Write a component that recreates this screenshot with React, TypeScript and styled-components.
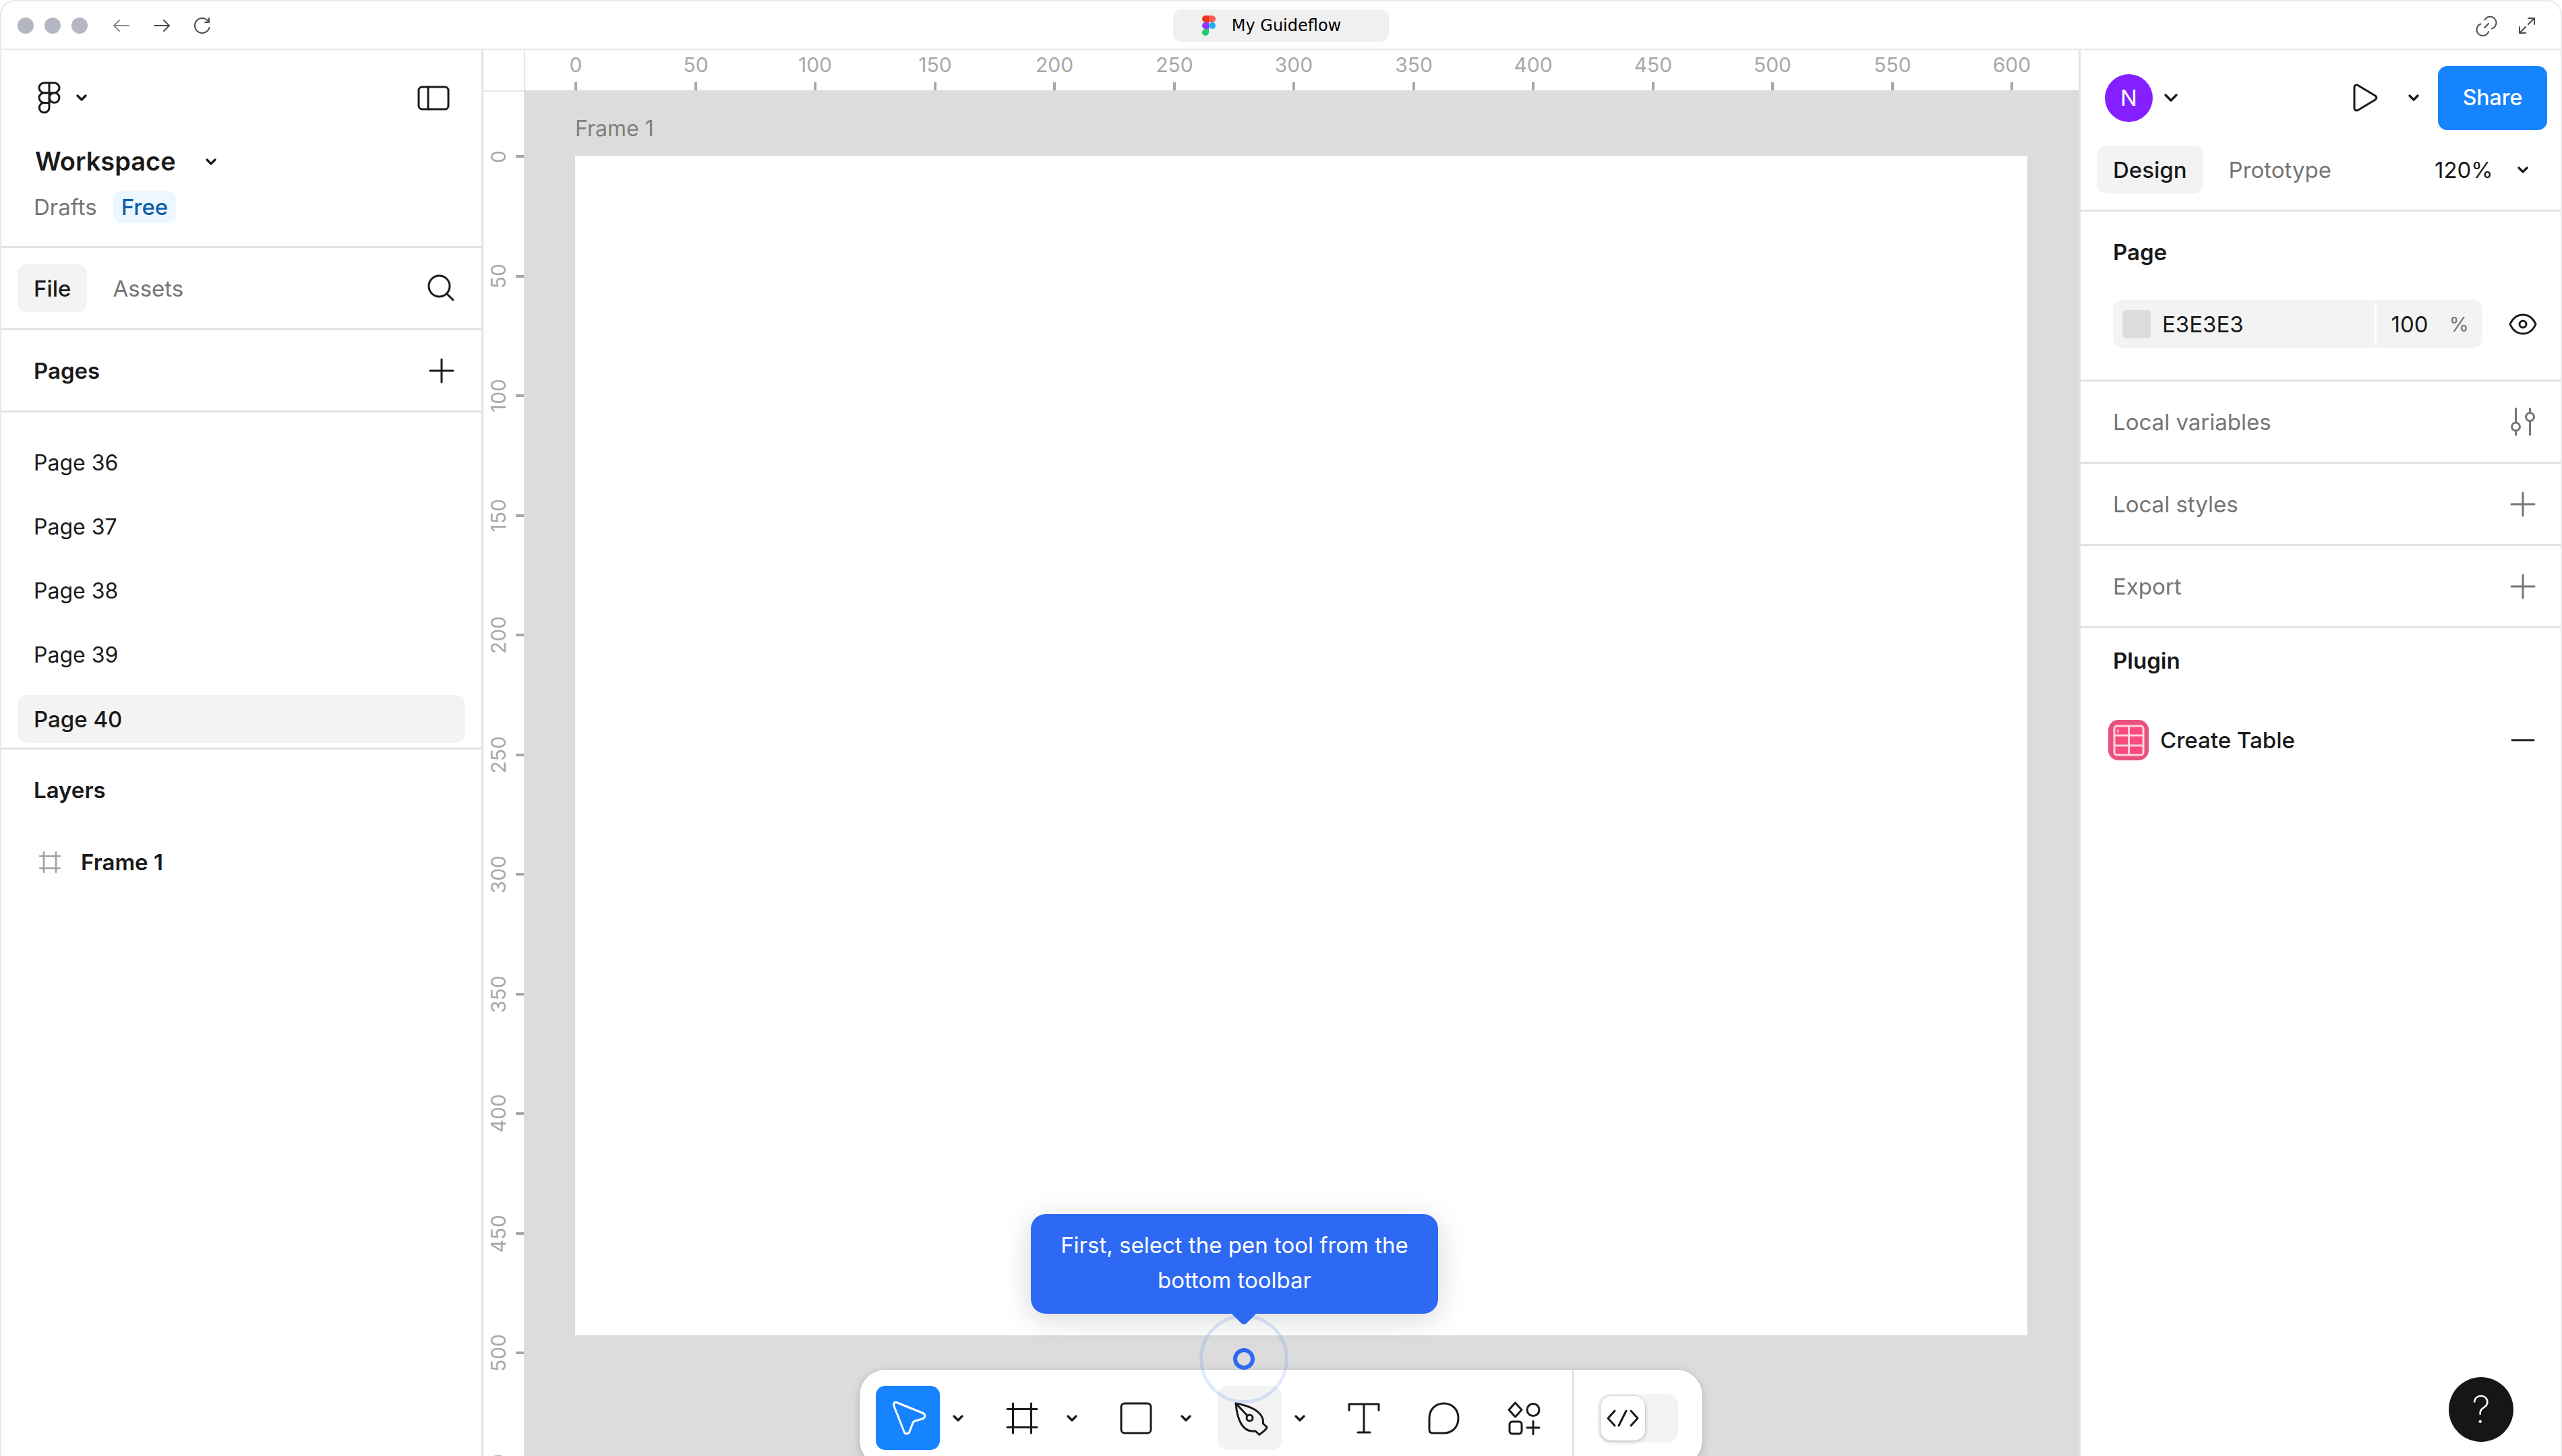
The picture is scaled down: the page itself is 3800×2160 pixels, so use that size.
import React from "react";
import styled, { createGlobalStyle } from "styled-components";

const ink = "#1a1a1a";
const muted = "#757575";
const line = "#e2e2e2";
const blue = "#1683ff";
const guideBlue = "#2e69f3";

const GlobalStyle = createGlobalStyle`
  *, *::before, *::after { box-sizing: border-box; }
  body { margin: 0; background: #fff; overflow: hidden; }
  button, input, select { font: inherit; color: inherit; border: 0; padding: 0; margin: 0; background: none; }
  button { cursor: pointer; }
  svg { display: block; flex: none; overflow: visible; }
  h1, h2, p, ul { margin: 0; padding: 0; }
`;

const App = styled.div`
  position: relative;
  display: flex;
  flex-direction: column;
  height: 100vh;
  overflow: hidden;
  border: 2px solid #e9e9e9;
  border-bottom: 0;
  border-radius: 22px 22px 0 0;
  background: #fff;
  color: ${ink};
  font: 400 33px/40px Inter, "Liberation Sans", sans-serif;
`;

const TitleBar = styled.header`
  display: grid;
  grid-template-columns: 1fr auto 1fr;
  align-items: center;
  height: 72px;
  padding: 2px 24px 0;
  border-bottom: 2px solid #e9e9e9;
`;

const TitleSide = styled.div<{ $end?: boolean }>`
  display: flex;
  align-items: center;
  justify-content: ${(p) => (p.$end ? "flex-end" : "flex-start")};
  gap: 36px;
  padding-right: ${(p) => (p.$end ? 14 : 0)}px;
`;

const Lights = styled.div`
  display: flex;
  gap: 16px;
  margin-right: 2px;
`;

const Light = styled.span`
  width: 24px;
  height: 24px;
  border-radius: 50%;
  background: #b4b7c1;
`;

const TabChip = styled.div`
  display: flex;
  align-items: center;
  justify-content: center;
  gap: 24px;
  width: 320px;
  height: 48px;
  padding-right: 28px;
  border-radius: 12px;
  background: #f0f0f0;
  color: #000;
  font: 400 24px/32px "DejaVu Sans", sans-serif;
`;

const TitleButton = styled.button<{ $dim?: boolean }>`
  display: flex;
  align-items: center;
  justify-content: center;
  width: 24px;
  height: 24px;
  color: ${(p) => (p.$dim ? "#8a8a8a" : "#4a4a4a")};
`;

const Workarea = styled.div`
  flex: 1;
  display: flex;
  min-height: 0;
`;

const Panel = styled.aside<{ $side: "left" | "right" }>`
  flex: none;
  width: 715px;
  ${(p) => (p.$side === "left" ? "border-right" : "border-left")}: 3px solid ${line};
  background: #fff;
`;

const Section = styled.section<{ $last?: boolean }>`
  border-bottom: ${(p) => (p.$last ? "0" : `3px solid ${line}`)};
`;

const Row = styled.div<{ $h?: number; $left?: number; $right?: number; $gap?: number }>`
  display: flex;
  align-items: center;
  height: ${(p) => p.$h ?? 119}px;
  padding: 0 ${(p) => p.$right ?? 24}px 0 ${(p) => p.$left ?? 48}px;
  gap: ${(p) => p.$gap ?? 0}px;
`;

const Spacer = styled.span`
  flex: 1;
`;

const Heading = styled.h2<{ $muted?: boolean }>`
  flex: 1;
  font-size: 33px;
  font-weight: ${(p) => (p.$muted ? 400 : 600)};
  color: ${(p) => (p.$muted ? muted : ink)};
`;

const IconButton = styled.button<{ $size?: number; $muted?: boolean }>`
  display: flex;
  align-items: center;
  justify-content: center;
  flex: none;
  width: ${(p) => p.$size ?? 71}px;
  height: ${(p) => p.$size ?? 71}px;
  border-radius: 14px;
  color: ${(p) => (p.$muted ? muted : ink)};
`;

const MenuButton = styled.button<{ $gap: number }>`
  display: flex;
  align-items: center;
  gap: ${(p) => p.$gap}px;
`;

const FileHead = styled.div`
  padding: 23px 0 38px;
`;

const WorkspaceName = styled.h1`
  font-size: 38px;
  line-height: 71px;
  font-weight: 600;
`;

const Plan = styled.span`
  padding: 0 12px;
  border-radius: 12px;
  background: #edf7ff;
  color: #0f5ea8;
  line-height: 48px;
  font-weight: 500;
`;

const Muted = styled.span`
  color: ${muted};
`;

const Tab = styled.button<{ $active?: boolean }>`
  height: 71px;
  padding: 0 24px;
  border-radius: 14px;
  background: ${(p) => (p.$active ? "#f3f3f3" : "transparent")};
  color: ${(p) => (p.$active ? ink : muted)};
  font-weight: ${(p) => (p.$active ? 500 : 400)};
`;

const PageList = styled.ul`
  display: flex;
  flex-direction: column;
  gap: 24px;
  padding: 39px 24px 7px;
  list-style: none;
`;

const PageItem = styled.button<{ $active: boolean }>`
  display: block;
  width: 100%;
  height: 71px;
  padding: 0 24px;
  border-radius: 14px;
  text-align: left;
  background: ${(p) => (p.$active ? "#f3f3f3" : "transparent")};
  font-size: ${(p) => (p.$active ? 33 : 32)}px;
  font-weight: ${(p) => (p.$active ? 500 : 400)};
`;

const Layer = styled.button`
  display: flex;
  align-items: center;
  gap: 30px;
  width: 100%;
  height: 95px;
  padding: 0 56px;
  font-weight: 600;
`;

const LayerMark = styled.span`
  color: #a0a0a0;
`;

const Stage = styled.main`
  flex: 1;
  display: grid;
  grid-template: 60px 1fr / 60px 1fr;
  min-width: 0;
`;

const TopRuler = styled.div`
  position: relative;
  overflow: hidden;
  border-left: 2px solid #e6e6e6;
`;

const SideRuler = styled.div`
  position: relative;
  overflow: hidden;
  border-top: 2px solid #e6e6e6;
`;

const rulerMark = `
  position: absolute;
  display: flex;
  align-items: center;
  justify-content: space-between;
  color: #a8a8a8;
  font-size: 30px;
  line-height: 30px;
  white-space: nowrap;
`;

const TopMark = styled.span`
  ${rulerMark}
  flex-direction: column;
  top: 7px;
  bottom: 0;
  width: 120px;
  margin-left: -60px;
  &::after { content: ""; width: 4px; height: 12px; background: #a8a8a8; }
`;

const SideMark = styled.span`
  ${rulerMark}
  left: 7px;
  right: 0;
  height: 120px;
  margin-top: -60px;
  &::after { content: ""; width: 12px; height: 4px; background: #a8a8a8; }
`;

const Turned = styled.span`
  writing-mode: vertical-rl;
  transform: rotate(180deg);
`;

const Canvas = styled.div`
  display: flex;
  flex-direction: column;
  gap: 20px;
  padding: 37px 76px 179px;
  background: #dcdcdc;
`;

const FrameLabel = styled.span`
  color: #808080;
  font-size: 32px;
`;

const Artboard = styled.div`
  flex: 1;
  background: #fff;
`;

const Avatar = styled.span`
  display: flex;
  align-items: center;
  justify-content: center;
  width: 71px;
  height: 71px;
  border-radius: 50%;
  background: #8420ff;
  color: #fff;
`;

const ShareButton = styled.button`
  width: 162px;
  height: 95px;
  margin-left: 12px;
  border-radius: 14px;
  background: ${blue};
  color: #fff;
  font-size: 32px;
  font-weight: 500;
`;

const InspectorHead = styled.div`
  display: flex;
  flex-direction: column;
  gap: 23px;
  padding: 23px 0 24px;
`;

const ZoomField = styled.label`
  display: flex;
  align-items: center;
  gap: 36px;
`;

const ZoomSelect = styled.select`
  appearance: none;
  outline: 0;
`;

const FillRow = styled.div`
  display: flex;
  gap: 24px;
  padding: 12px 21px 47px 48px;
`;

const FillBox = styled.div`
  flex: 1;
  display: flex;
  align-items: center;
  min-width: 0;
  height: 71px;
  padding-left: 14px;
  border-radius: 14px;
  background: #f3f3f3;
`;

const Swatch = styled.span`
  flex: none;
  width: 42px;
  height: 42px;
  margin-right: 17px;
  border-radius: 5px;
  background: #dcdcdc;
`;

const HexInput = styled.input`
  flex: 1;
  width: 100%;
  min-width: 0;
`;

const OpacityBox = styled.label`
  flex: none;
  display: flex;
  align-items: center;
  gap: 16px;
  height: 65px;
  padding: 0 20px 0 22px;
  border-left: 3px solid #fff;
  color: ${muted};
`;

const OpacityInput = styled.input`
  width: 70px;
  color: ${ink};
`;

const Percent = styled.span`
  font-size: 30px;
`;

const PluginBody = styled.div`
  display: flex;
  flex-direction: column;
  gap: 23px;
`;

const PluginName = styled.span`
  flex: 1;
  font-weight: 500;
`;

const DockLayer = styled.div`
  position: absolute;
  left: 0;
  right: 0;
  bottom: -15px;
  display: flex;
  justify-content: center;
  pointer-events: none;
`;

const Dock = styled.div`
  position: relative;
  display: flex;
  align-items: center;
  gap: 24px;
  height: 143px;
  padding-left: 24px;
  border-radius: 38px;
  background: #fff;
  box-shadow: 0 4px 14px rgba(0, 0, 0, 0.18), 0 0 2px rgba(0, 0, 0, 0.2);
  pointer-events: auto;
`;

const ToolGroup = styled.div`
  display: flex;
  align-items: center;
`;

const Tool = styled.button<{ $tone?: "active" | "hover" }>`
  display: flex;
  align-items: center;
  justify-content: center;
  width: 95px;
  height: 95px;
  border-radius: 14px;
  color: ${(p) => (p.$tone === "active" ? "#fff" : ink)};
  background: ${(p) => (p.$tone === "active" ? blue : p.$tone === "hover" ? "#f3f3f3" : "transparent")};
`;

const ToolMore = styled.button`
  display: flex;
  align-items: center;
  justify-content: center;
  width: 50px;
  height: 95px;
  padding-left: 4px;
`;

const DevArea = styled.div`
  display: flex;
  align-items: center;
  align-self: stretch;
  padding: 0 36px;
  border-left: 3px solid ${line};
`;

const DevToggle = styled.label`
  display: flex;
  align-items: center;
  width: 118px;
  height: 72px;
  padding-left: 3px;
  border-radius: 16px;
  background: #f3f3f3;
`;

const HiddenCheck = styled.input`
  appearance: none;
  width: 0;
  height: 0;
`;

const Thumb = styled.span`
  display: flex;
  align-items: center;
  justify-content: center;
  width: 66px;
  height: 66px;
  border-radius: 16px;
  background: #fff;
  box-shadow: 0 2px 6px rgba(0, 0, 0, 0.2), 0 0 2px rgba(0, 0, 0, 0.2);
`;

const Tip = styled.div`
  position: absolute;
  left: 254px;
  bottom: 226px;
  width: 604px;
  padding: 20px 40px 24px;
  border-radius: 22px;
  background: ${guideBlue};
  box-shadow: 0 8px 44px rgba(0, 0, 0, 0.16);
  color: #fff;
  line-height: 52px;
  text-align: center;
`;

const TipArrow = styled.svg`
  position: absolute;
  left: 296px;
  top: 147px;
`;

const Ring = styled.div`
  position: absolute;
  left: 504px;
  top: -82px;
  display: flex;
  align-items: center;
  justify-content: center;
  width: 132px;
  height: 132px;
  border: 5px solid rgba(46, 105, 243, 0.15);
  border-radius: 50%;
`;

const Dot = styled.button`
  width: 32px;
  height: 32px;
  border: 6px solid ${guideBlue};
  border-radius: 50%;
`;

const HelpButton = styled.button`
  position: absolute;
  right: 70px;
  bottom: 21px;
  width: 96px;
  height: 96px;
  border-radius: 50%;
  background: #161616;
  color: #fff;
  font-size: 56px;
  font-weight: 200;
  line-height: 96px;
`;

type IconProps = { w: number; h: number; sw?: number; children: React.ReactNode };
const Icon = ({ w, h, sw = 3, children }: IconProps) => (
  <svg
    width={w}
    height={h}
    viewBox={`0 0 ${w} ${h}`}
    fill="none"
    stroke="currentColor"
    strokeWidth={sw}
    strokeLinecap="round"
    strokeLinejoin="round"
    aria-hidden="true"
  >
    {children}
  </svg>
);

const Chevron = ({ wide }: { wide?: boolean }) =>
  wide ? (
    <Icon w={20} h={12} sw={3.4}><path d="M2 2 10 10 18 2" /></Icon>
  ) : (
    <Icon w={16} h={10} sw={3.4}><path d="M2 2 8 8 14 2" /></Icon>
  );

const Plus = () => <Icon w={36} h={36}><path d="M18 1V35M1 18H35" /></Icon>;

const FrameMark = ({ size, sw }: { size: number; sw: number }) => (
  <svg width={size} height={size} viewBox="0 0 48 48" fill="none" stroke="currentColor" strokeWidth={sw} strokeLinecap="round" aria-hidden="true">
    <path d="M10.500 2V46M37.500 2V46M2 10.500H46M2 37.500H46" />
  </svg>
);

const FigmaOutline = () => (
  <Icon w={34} h={48}>
    <path d="M9.350 2H24.650a7.350 7.350 0 0 1 0 14.700H9.350a7.350 7.350 0 0 1 0-14.700Z" />
    <path d="M17 16.700H9.350a7.350 7.350 0 0 0 0 14.700H17" />
    <circle cx="24.650" cy="24" r="7.350" />
    <path d="M17 31.400H9.350A7.350 7.350 0 1 0 17 38.700V2" />
  </Icon>
);

const FigmaColor = () => (
  <svg width="20" height="30" viewBox="0 0 20 30" aria-hidden="true">
    <path d="M10 0H5a5 5 0 0 0 0 10h5z" fill="#eb3518" />
    <path d="M10 0h5a5 5 0 0 1 0 10h-5z" fill="#ff5d52" />
    <path d="M10 10H5a5 5 0 0 0 0 10h5z" fill="#8f38ff" />
    <circle cx="15" cy="15" r="5" fill="#1cb0fb" />
    <path d="M10 20H5a5 5 0 1 0 5 5z" fill="#1fca70" />
  </svg>
);

const PluginLogo = () => (
  <svg width="60" height="60" viewBox="0 0 60 60" fill="none" aria-hidden="true">
    <rect width="60" height="60" rx="15" fill="#e8527d" />
    <rect x="9" y="9" width="43" height="43" rx="4" fill="#f94b7c" stroke="#ffd3e2" strokeWidth="3" />
    <path d="M30.500 9V52M9 23H52M9 38H52" stroke="#ffd3e2" strokeWidth="3" />
    <path d="M14.500 14V19" stroke="#ffd3e2" strokeWidth="2" />
  </svg>
);

const pages = ["Page 36", "Page 37", "Page 38", "Page 39", "Page 40"];
const currentPage = "Page 40";
const steps = (max: number) => Array.from({ length: max / 50 + 1 }, (_, i) => i * 50);
const pxPerUnit = 3.55;

const localRows = [
  {
    name: "Local variables",
    action: "Open variables",
    icon: (
      <Icon w={36} h={41}>
        <path d="M7.500 1V21M7.500 34V40M28.500 1V7M28.500 20V40" />
        <circle cx="7.500" cy="28" r="6" />
        <circle cx="28.500" cy="13.500" r="6" />
      </Icon>
    ),
  },
  { name: "Local styles", action: "Add style", icon: <Plus /> },
  { name: "Export", action: "Add export", icon: <Plus /> },
];

const tools: { name: string; tone?: "active" | "hover"; more?: boolean; icon: React.ReactNode }[] = [
  {
    name: "Move",
    tone: "active",
    more: true,
    icon: (
      <Icon w={48} h={51}>
        <path d="M3 8C2 3 4 1 8 3L45 18C50 20 50 25 45 27L34 30Q31.500 31 30.500 34L26 46C24 50 19.500 50 18 46Z" />
      </Icon>
    ),
  },
  { name: "Frame", more: true, icon: <FrameMark size={48} sw={3} /> },
  { name: "Rectangle", more: true, icon: <Icon w={48} h={48}><rect x="2" y="2" width="44" height="44" rx="5" /></Icon> },
  {
    name: "Pen",
    tone: "hover",
    more: true,
    icon: (
      <Icon w={46} h={48}>
        <path d="M2 2C20 5 44 13 42.500 32L48 37C48 41 42 44 37 48.500L31 43C12 46 4 26 2 2Z" />
        <path d="M2 2 19 20" />
        <circle cx="22.500" cy="23.500" r="4.500" />
      </Icon>
    ),
  },
  { name: "Text", icon: <Icon w={48} h={46}><path d="M2 11V2H46V11M24 2V44M15 44H33" /></Icon> },
  {
    name: "Comment",
    icon: (
      <Icon w={47} h={48}>
        <path d="M2 24C2 11 11 2 23.500 2S45 11 45 24S36 46 23.500 46H7Q2 46 2 41Z" />
      </Icon>
    ),
  },
  {
    name: "Actions",
    icon: (
      <Icon w={49} h={50}>
        <path d="M11.500 2 21 12.500 11.500 23 2 12.500Z" />
        <circle cx="38" cy="12.500" r="9" />
        <rect x="3" y="30" width="18" height="18" rx="4" />
        <path d="M38 29.500V48.500M29 39H47" />
      </Icon>
    ),
  },
];

export default function FigmaDemo() {
  return (
    <>
      <GlobalStyle />
      <App>
        <TitleBar>
          <TitleSide>
            <Lights><Light /><Light /><Light /></Lights>
            <TitleButton $dim aria-label="Back">
              <Icon w={24} h={20} sw={2}><path d="M23 10H1M9 2 1 10 9 18" /></Icon>
            </TitleButton>
            <TitleButton aria-label="Forward">
              <Icon w={24} h={20} sw={2}><path d="M1 10H23M15 2 23 10 15 18" /></Icon>
            </TitleButton>
            <TitleButton aria-label="Reload">
              <Icon w={24} h={24} sw={2}>
                <path d="M22.500 15A11 11 0 1 1 20 4.500L22 7M22 1V7H16" />
              </Icon>
            </TitleButton>
          </TitleSide>
          <TabChip><FigmaColor />My Guideflow</TabChip>
          <TitleSide $end>
            <TitleButton aria-label="Copy link">
              <Icon w={26} h={26} sw={2}>
                <path d="M10.500 4.500A9 9 0 1 1 20.500 17.500M4.500 10.500A9 9 0 1 0 16 22M10 16 16 10" />
              </Icon>
            </TitleButton>
            <TitleButton aria-label="Full screen">
              <Icon w={24} h={24} sw={2}>
                <path d="M14 10 23 1M14 1H23V10M10 14 1 23M1 14V23H10" />
              </Icon>
            </TitleButton>
          </TitleSide>
        </TitleBar>

        <Workarea>
          <Panel $side="left">
            <Section>
              <FileHead>
                <Row $h={96} $left={54}>
                  <MenuButton $gap={23} aria-label="Main menu"><FigmaOutline /><Chevron /></MenuButton>
                  <Spacer />
                  <IconButton $size={95} aria-label="Hide sidebar">
                    <Icon w={48} h={37}><rect x="2" y="2" width="44" height="33" rx="5" /><path d="M16 2V35" /></Icon>
                  </IconButton>
                </Row>
                <Row $h={93} $left={50}>
                  <MenuButton $gap={44}><WorkspaceName>Workspace</WorkspaceName><Chevron /></MenuButton>
                </Row>
                <Row $h={41} $gap={24}><Muted>Drafts</Muted><Plan>Free</Plan></Row>
              </FileHead>
            </Section>
            <Section>
              <Row $left={24} $gap={14}>
                <Tab $active>File</Tab>
                <Tab>Assets</Tab>
                <Spacer />
                <IconButton aria-label="Search">
                  <Icon w={42} h={42}><circle cx="17.500" cy="17.500" r="15.500" /><path d="M29 29 38 38" /></Icon>
                </IconButton>
              </Row>
            </Section>
            <Section>
              <Row><Heading>Pages</Heading><IconButton aria-label="Add page"><Plus /></IconButton></Row>
            </Section>
            <Section>
              <PageList>
                {pages.map((p) => (
                  <li key={p}><PageItem $active={p === currentPage}>{p}</PageItem></li>
                ))}
              </PageList>
            </Section>
            <Section $last>
              <Row><Heading>Layers</Heading></Row>
              <Layer><LayerMark><FrameMark size={32} sw={4} /></LayerMark>Frame 1</Layer>
            </Section>
          </Panel>

          <Stage>
            <div />
            <TopRuler>
              {steps(600).map((v) => (
                <TopMark key={v} style={{ left: Math.round(75 + v * pxPerUnit) }}>{v}</TopMark>
              ))}
            </TopRuler>
            <SideRuler>
              {steps(550).map((v) => (
                <SideMark key={v} style={{ top: Math.round(96 + v * pxPerUnit) }}><Turned>{v}</Turned></SideMark>
              ))}
            </SideRuler>
            <Canvas>
              <FrameLabel>Frame 1</FrameLabel>
              <Artboard />
            </Canvas>
          </Stage>

          <Panel $side="right">
            <Section>
              <InspectorHead>
                <Row $h={96} $left={36} $right={20}>
                  <MenuButton $gap={17} aria-label="Account"><Avatar>N</Avatar><Chevron wide /></MenuButton>
                  <Spacer />
                  <IconButton $size={95} aria-label="Present">
                    <Icon w={37} h={42}>
                      <path d="M2 6C2 2 5 1 8 3L33 18C35.500 20 35.500 22 33 24L8 39C5 41 2 40 2 36Z" />
                    </Icon>
                  </IconButton>
                  <IconButton $size={48} aria-label="Present options"><Chevron /></IconButton>
                  <ShareButton>Share</ShareButton>
                </Row>
                <Row $h={71} $left={24} $right={48} $gap={14}>
                  <Tab $active>Design</Tab>
                  <Tab>Prototype</Tab>
                  <Spacer />
                  <ZoomField>
                    <ZoomSelect aria-label="Zoom" defaultValue="120%"><option>120%</option></ZoomSelect>
                    <Chevron />
                  </ZoomField>
                </Row>
              </InspectorHead>
            </Section>
            <Section>
              <Row><Heading>Page</Heading></Row>
              <FillRow>
                <FillBox>
                  <Swatch />
                  <HexInput aria-label="Page color" defaultValue="E3E3E3" />
                  <OpacityBox><OpacityInput aria-label="Opacity" defaultValue="100" /><Percent>%</Percent></OpacityBox>
                </FillBox>
                <IconButton aria-label="Toggle visibility">
                  <Icon w={42} h={32}>
                    <path d="M2 16C6 7 13 2 21 2S36 7 40 16C36 25 29 30 21 30S6 25 2 16Z" />
                    <circle cx="21" cy="16" r="5" />
                  </Icon>
                </IconButton>
              </FillRow>
            </Section>
            {localRows.map((r) => (
              <Section key={r.name}>
                <Row $right={21}>
                  <Heading $muted>{r.name}</Heading>
                  <IconButton $muted aria-label={r.action}>{r.icon}</IconButton>
                </Row>
              </Section>
            ))}
            <Section $last>
              <PluginBody>
                <Row $h={95}><Heading>Plugin</Heading></Row>
                <Row $h={95} $left={41} $right={21} $gap={17}>
                  <PluginLogo />
                  <PluginName>Create Table</PluginName>
                  <IconButton aria-label="Remove plugin"><Icon w={36} h={4}><path d="M2 2H34" /></Icon></IconButton>
                </Row>
              </PluginBody>
            </Section>
          </Panel>
        </Workarea>

        <DockLayer>
          <Dock>
            {tools.map((t) => (
              <ToolGroup key={t.name}>
                <Tool $tone={t.tone} aria-label={t.name}>{t.icon}</Tool>
                {t.more && <ToolMore aria-label={`${t.name} options`}><Chevron /></ToolMore>}
              </ToolGroup>
            ))}
            <DevArea>
              <DevToggle>
                <HiddenCheck type="checkbox" aria-label="Dev mode" />
                <Thumb>
                  <Icon w={48} h={26}><path d="M12 2 2 13 12 24M36 2 46 13 36 24M29 2 18 24" /></Icon>
                </Thumb>
              </DevToggle>
            </DevArea>
            <Ring><Dot aria-label="Next step" /></Ring>
            <Tip role="tooltip">
              First, select the pen tool from the bottom toolbar
              <TipArrow width="40" height="17" viewBox="0 0 40 17" aria-hidden="true">
                <path d="M1 0H39L24 15Q20 18 16 15Z" fill={guideBlue} />
              </TipArrow>
            </Tip>
          </Dock>
        </DockLayer>
        <HelpButton aria-label="Help">?</HelpButton>
      </App>
    </>
  );
}
